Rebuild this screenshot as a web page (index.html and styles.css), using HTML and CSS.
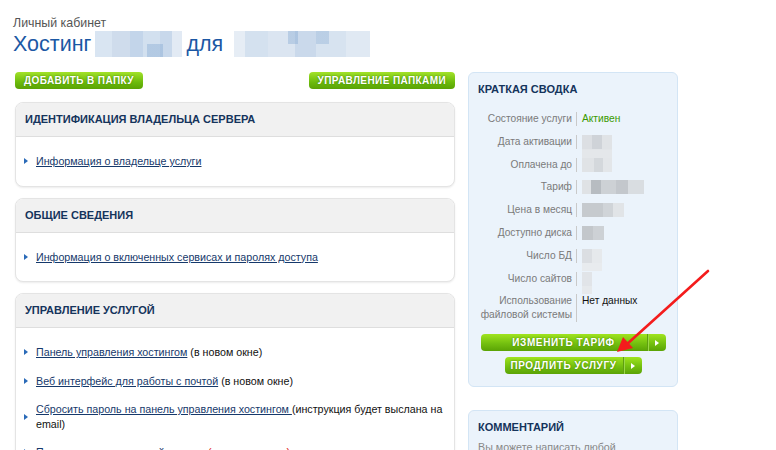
FILE: index.html
```html
<!DOCTYPE html>
<html lang="ru">
<head>
<meta charset="UTF-8" />
<title>Личный кабинет — Хостинг</title>
<link rel="stylesheet" href="styles.css">
</head>
<body>

<!-- Header -->
<div class="header">
  <div class="crumb">Личный кабинет</div>
  <h1 class="title">Хостинг <span class="blur blur-a"></span> для <span class="blur blur-b"></span></h1>
</div>

<div class="main">

  <!-- Left column -->
  <div class="left">
    <div class="toolbar">
      <a class="gbtn" href="#">Добавить в папку</a>
      <a class="gbtn" href="#">Управление папками</a>
    </div>

    <div class="panel">
      <div class="panel-head">Идентификация владельца сервера</div>
      <ul class="links">
        <li><a href="#">Информация о владельце услуги</a></li>
      </ul>
    </div>

    <div class="panel">
      <div class="panel-head">Общие сведения</div>
      <ul class="links">
        <li><a href="#">Информация о включенных сервисах и паролях доступа</a></li>
      </ul>
    </div>

    <div class="panel">
      <div class="panel-head">Управление услугой</div>
      <ul class="links">
        <li><a href="#">Панель управления хостингом</a> (в новом окне)</li>
        <li><a href="#">Веб интерфейс для работы с почтой</a> (в новом окне)</li>
        <li><a href="#">Сбросить пароль на панель управления хостингом </a>(инструкция будет выслана на email)</li>
        <li><a href="#">Перенос услуги на другой аккаунт</a> <span class="warn">(платная услуга)</span></li>
      </ul>
    </div>
  </div>

  <!-- Right column -->
  <div class="right">
    <div class="box">
      <div class="box-title">Краткая сводка</div>
      <div class="summary">
        <div class="lbl">Состояние услуги</div><div class="val ok">Активен</div>
        <div class="lbl">Дата активации</div><div class="val"><span class="gblur gb-date"></span></div>
        <div class="lbl">Оплачена до</div><div class="val"><span class="gblur gb-date2"></span></div>
        <div class="lbl">Тариф</div><div class="val"><span class="gblur gb-tarif"></span></div>
        <div class="lbl">Цена в месяц</div><div class="val"><span class="gblur gb-price"></span></div>
        <div class="lbl">Доступно диска</div><div class="val"><span class="gblur gb-disk"></span></div>
        <div class="lbl">Число БД</div><div class="val"><span class="gblur gb-db"></span></div>
        <div class="lbl">Число сайтов</div><div class="val"><span class="gblur gb-sites"></span></div>
        <div class="lbl">Использование файловой системы</div><div class="val">Нет данных</div>
      </div>
      <div class="actions">
        <a class="abtn wide" href="#"><span class="abtn-text">Изменить тариф</span><span class="abtn-arrow"></span></a>
        <a class="abtn" href="#"><span class="abtn-text">Продлить услугу</span><span class="abtn-arrow"></span></a>
      </div>
    </div>

    <div class="box">
      <div class="box-title short">Комментарий</div>
      <p class="box-note">Вы можете написать любой<br>комментарий к услуге</p>
    </div>
  </div>

</div>

<!-- Red pointer arrow drawn over the page -->
<svg class="pointer" width="776" height="450" viewBox="0 0 776 450">
  <line x1="708" y1="271" x2="626" y2="345" stroke="#f41c1c" stroke-width="2.6" stroke-linecap="round"/>
  <polygon points="617,352 623,337 633,348" fill="#f41c1c"/>
</svg>

</body>
</html>
```

FILE: styles.css
```css
/* Base */
body {
  margin: 0;
  font-family: "Liberation Sans", Arial, sans-serif;
  font-size: 10.7px;
  color: #111;
  background: #fff;
  overflow: hidden;
}
a { color: #16396b; }

/* Header */
.header {
  padding: 16px 13px 0;
}
.crumb {
  font-size: 12.4px;
  line-height: 14px;
  color: #555;
}
.title {
  margin: 0;
  font-size: 21.5px;
  line-height: 28px;
  font-weight: normal;
  color: #1b58a4;
  display: flex;
  align-items: center;
  gap: 4px;
}
.blur {
  display: inline-block;
  height: 26px;
}
.blur-a {
  width: 87px;
  background:
    linear-gradient(90deg, transparent 0 60%, rgba(120,160,205,.35) 60% 78%, transparent 78%) 0 13px / 100% 13px no-repeat,
    linear-gradient(90deg, #d9e5f2 0 20%, #cfdcec 20% 40%, #c3d5ea 40% 55%, #d2e0ef 55% 75%, #c8d8eb 75% 88%, #e2eaf4 88%);
}
.blur-b {
  width: 136px;
  margin-left: 7px;
  background:
    linear-gradient(90deg, transparent 0 40%, rgba(120,160,205,.35) 40% 47%, transparent 47% 60%, rgba(120,160,205,.3) 60% 70%, transparent 70%) 0 0 / 100% 13px no-repeat,
    linear-gradient(90deg, #e6edf5 0 8%, #d4e1ef 8% 25%, #dbe5f1 25% 45%, #cad9eb 45% 60%, #d7e3f0 60% 82%, #e0e9f3 82%);
}

/* Layout */
.main {
  display: flex;
  gap: 13px;
  padding: 14px 0 0 15px;
}
.left { width: 440px; }
.right { width: 210px; }

/* Green buttons */
.toolbar {
  display: flex;
  justify-content: space-between;
  margin-bottom: 13px;
}
.gbtn {
  display: block;
  height: 17px;
  line-height: 17px;
  padding: 0 9px;
  border-radius: 4px;
  background: linear-gradient(#a3e22a, #6cbb0c 60%, #5aa304);
  color: #fff;
  font-size: 10px;
  font-weight: bold;
  letter-spacing: 0.4px;
  text-transform: uppercase;
  text-decoration: none;
  text-shadow: 0 0 2px #3c7a00;
}

/* Panels */
.panel {
  border: 1px solid #e4e4e4;
  border-radius: 8px;
  box-shadow: 0 1px 2px rgba(0,0,0,.08);
  margin-bottom: 11px;
  background: #fff;
  overflow: hidden;
}
.panel-head {
  background: #f1f1f1;
  border-bottom: 1px solid #dedede;
  height: 33px;
  line-height: 33px;
  padding-left: 9px;
  font-size: 11px;
  font-weight: bold;
  color: #15345c;
  text-transform: uppercase;
}
.links {
  list-style: none;
  margin: 0;
  padding: 17px 10px 17px 20px;
  line-height: 14.5px;
}
.links li {
  position: relative;
  margin-bottom: 14px;
}
.links li:last-child { margin-bottom: 0; }
.links li::before {
  content: "";
  position: absolute;
  left: -12px;
  top: 50%;
  margin-top: -3px;
  border-left: 4px solid #2a6ab8;
  border-top: 3px solid transparent;
  border-bottom: 3px solid transparent;
}
.warn { color: #e02020; }

/* Right boxes */
.box {
  background: #ebf3fb;
  border: 1px solid #d3e5f5;
  border-radius: 6px;
  padding: 9px 9px 12px;
  margin-bottom: 23px;
}
.box-title {
  font-size: 11px;
  font-weight: bold;
  color: #15345c;
  text-transform: uppercase;
  line-height: 14px;
  margin-bottom: 16px;
}
.box-title.short { margin-bottom: 6px; }
.box-note {
  margin: 0;
  color: #888;
  line-height: 14px;
}
.summary {
  display: grid;
  grid-template-columns: 99px 1fr;
  row-gap: 8.8px;
  line-height: 14px;
  font-size: 10.2px;
}
.lbl {
  text-align: right;
  color: #7a7a7a;
  padding-right: 4px;
  border-right: 1px solid #c9c9c9;
}
.val {
  padding-left: 5px;
  color: #111;
}
.ok { color: #3a9a00; }

/* Pixelated (hidden) values; shadows extend the mosaic without changing row height */
.gblur {
  display: inline-block;
  height: 14px;
  vertical-align: top;
}
.gb-date { width: 30px; background: linear-gradient(90deg, #dcdfe3 0 33%, #cfd3d8 33% 66%, #e0e3e6 66%); box-shadow: 0 8px 0 #e2e5e8; }
.gb-date2 { width: 30px; background: linear-gradient(90deg, #e0e3e6 0 40%, #d4d8dc 40% 70%, #e3e6e9 70%); box-shadow: 0 -8px 0 #e4e7ea; }
.gb-tarif { width: 62px; background: linear-gradient(90deg, #dfe2e5 0 15%, #b7bcc1 15% 30%, #cdd1d5 30% 55%, #c3c7cc 55% 75%, #d9dde1 75%); }
.gb-price { width: 42px; background: linear-gradient(90deg, #c6cace 0 50%, #d0d4d8 50% 75%, #e1e4e7 75%); }
.gb-disk { width: 22px; background: linear-gradient(90deg, #c3c7cb 0 50%, #cdd1d5 50%); }
.gb-db { width: 20px; background: linear-gradient(90deg, #dbdee2 0 50%, #e6e9ec 50%); box-shadow: 0 8px 0 #e8ebee; }
.gb-sites { width: 10px; background: #e1e4e8; box-shadow: 0 8px 0 #e6e9ec; }

/* Action buttons */
.actions {
  display: flex;
  flex-direction: column;
  align-items: center;
  gap: 6px;
  margin-top: 12px;
}
.abtn {
  display: flex;
  height: 17px;
  width: 137px;
  border-radius: 4px;
  background: linear-gradient(#a0e41e, #74c010 55%, #5aa305);
  text-decoration: none;
  color: #fff;
}
.abtn.wide { width: 185px; }
.abtn-text {
  flex: 1;
  text-align: center;
  white-space: nowrap;
  font-size: 10px;
  font-weight: bold;
  letter-spacing: 0.6px;
  line-height: 17px;
  text-transform: uppercase;
  text-shadow: 0 0 2px #3c7a00;
}
.abtn-arrow {
  width: 18px;
  border-left: 1px solid #5f9f10;
  box-shadow: inset 1px 0 0 #9ad848;
  position: relative;
}
.abtn-arrow::after {
  content: "";
  position: absolute;
  left: 7px;
  top: 6px;
  border-left: 4px solid #fff;
  border-top: 3px solid transparent;
  border-bottom: 3px solid transparent;
}

/* Red pointer overlay */
.pointer {
  position: absolute;
  left: 0;
  top: 0;
  pointer-events: none;
}
```
